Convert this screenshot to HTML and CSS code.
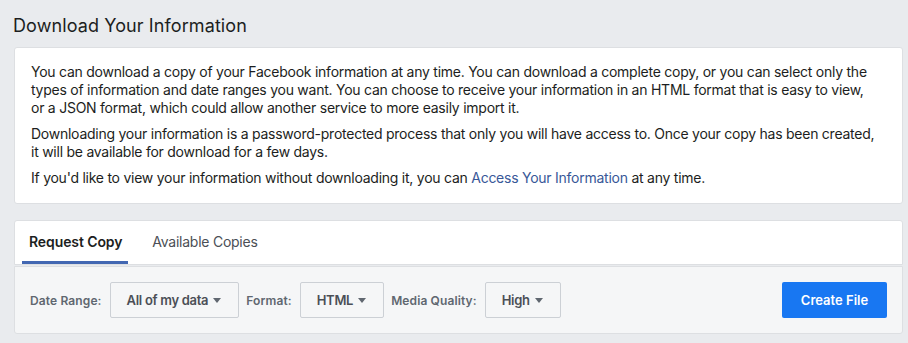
FILE: index.html
```html
<!DOCTYPE html>
<html>
<head>
<meta charset="utf-8">
<link rel="stylesheet" href="styles.css">
</head>
<body>
<div class="page">
  <h1 class="title">Download Your Information</h1>
  <div class="card intro">
    <p>You can download a copy of your Facebook information at any time. You can download a complete copy, or you can select only the types of information and date ranges you want. You can choose to receive your information in an HTML format that is easy to view, or a JSON format, which could allow another service to more easily import it.</p>
    <p>Downloading your information is a password-protected process that only you will have access to. Once your copy has been created, it will be available for download for a few days.</p>
    <p>If you'd like to view your information without downloading it, you can <a class="link" href="#">Access Your Information</a> at any time.</p>
  </div>
  <div class="request">
    <div class="card tabs">
      <div class="tab active">Request Copy</div>
      <div class="tab">Available Copies</div>
    </div>
    <div class="card options">
      <div class="fields">
        <span class="label">Date Range:</span>
        <button class="select">All of my data<span class="caret"></span></button>
        <span class="label">Format:</span>
        <button class="select">HTML<span class="caret"></span></button>
        <span class="label">Media Quality:</span>
        <button class="select">High<span class="caret"></span></button>
      </div>
      <button class="primary">Create File</button>
    </div>
  </div>
</div>
</body>
</html>
```
FILE: styles.css
```css
html, body {
  margin: 0;
  padding: 0;
  background: #e9ebee;
}
body {
  font-family: Inter, "Noto Sans", sans-serif;
  color: #1c1e21;
}
.page {
  padding: 0 5px 0 14px;
}
.title {
  margin: 0 0 0 -1px;
  padding: 14px 0 0 0;
  height: 33px;
  font-size: 18px;
  font-weight: 400;
  line-height: 24px;
  letter-spacing: 0.1px;
}
.card {
  background: #fff;
  border: 1px solid #dddfe2;
  border-radius: 3px;
}
.intro {
  padding: 15px 27px 16px 16px;
  font-size: 14px;
  line-height: 18px;
  letter-spacing: -0.25px;
}
.intro p {
  margin: 0 0 8px 0;
}
.intro p:last-child {
  margin-bottom: 0;
}
.link {
  color: #385898;
  text-decoration: none;
}
.request {
  margin-top: 16px;
}
.tabs {
  display: flex;
  padding: 0 7px;
  height: 43px;
  border-radius: 3px 3px 0 0;
}
.tab {
  padding: 2px 6px 0 7px;
  font-size: 14px;
  line-height: 38px;
  color: #4b4f56;
  border-bottom: 3px solid transparent;
  margin-right: 17px;
  letter-spacing: -0.25px;
}
.tab.active {
  color: #1c1e21;
  font-weight: 600;
  letter-spacing: -0.1px;
  border-bottom-color: #4267b2;
}
.options {
  margin-top: 1px;
  background: #f5f6f7;
  border-radius: 0 0 3px 3px;
  display: flex;
  align-items: center;
  justify-content: space-between;
  padding: 15px 15px 15px 15px;
}
.fields {
  display: flex;
  align-items: center;
}
.label {
  font-size: 12px;
  font-weight: 600;
  color: #606770;
  margin-right: 8px;
  letter-spacing: 0.12px;
}
.select {
  display: flex;
  align-items: center;
  height: 36px;
  padding: 0 17px 0 16px;
  margin-right: 7px;
  background: #f5f6f7;
  border: 1px solid #ccd0d5;
  border-radius: 2px;
  font-family: inherit;
  font-size: 13px;
  font-weight: 600;
  letter-spacing: -0.3px;
  color: #4b4f56;
}
.caret {
  width: 0;
  height: 0;
  margin-left: 5px;
  border-left: 4px solid transparent;
  border-right: 4px solid transparent;
  border-top: 5px solid #606770;
}
.primary {
  height: 36px;
  width: 105px;
  background: #1877f2;
  border: none;
  border-radius: 2px;
  color: #fff;
  font-family: inherit;
  font-size: 13px;
  font-weight: 600;
}
```
